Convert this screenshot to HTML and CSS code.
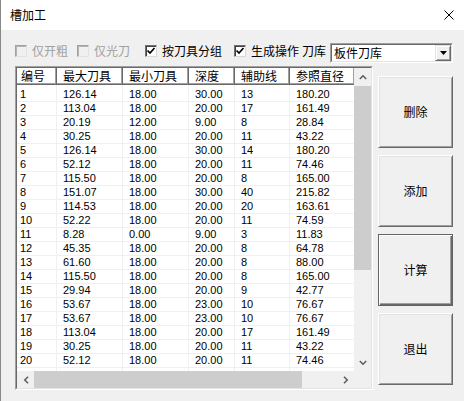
FILE: index.html
```html
<!DOCTYPE html>
<html lang="zh">
<head>
<meta charset="utf-8">
<title>槽加工</title>
<link rel="stylesheet" href="styles.css">
</head>
<body>
<div class="window">
  <div class="titlebar">
    <span class="title">槽加工</span>
    <svg class="close" width="10" height="10" viewBox="0 0 10 10"><path d="M0.5 0.5 L9.5 9.5 M9.5 0.5 L0.5 9.5" stroke="#000" stroke-width="1" fill="none"/></svg>
  </div>
  <div class="main">
    <div class="toolbar">
      <div class="check check-rough disabled"><span class="box"></span><span class="label">仅开粗</span></div>
      <div class="check check-finish disabled"><span class="box"></span><span class="label">仅光刀</span></div>
      <div class="check check-group"><span class="box"><svg width="10" height="10" viewBox="0 0 10 10"><polyline points="1.5,4.5 4,7 8.5,2" stroke="#000" stroke-width="1.7" fill="none"/></svg></span><span class="label">按刀具分组</span></div>
      <div class="check check-op"><span class="box"><svg width="10" height="10" viewBox="0 0 10 10"><polyline points="1.5,4.5 4,7 8.5,2" stroke="#000" stroke-width="1.7" fill="none"/></svg></span><span class="label">生成操作</span></div>
      <span class="lib-label">刀库</span>
      <div class="combo">
        <div class="combo-inner">
          <span class="combo-text">板件刀库</span>
          <span class="combo-btn"><svg width="7" height="4" viewBox="0 0 7 4"><polygon points="0,0 7,0 3.5,4" fill="#000"/></svg></span>
        </div>
      </div>
    </div>
    <div class="content">
      <div class="listview">
        <div class="listinner">
          <div class="viewport">
            <div class="header">
              <div class="hcell c1">编号</div>
              <div class="hcell c2">最大刀具</div>
              <div class="hcell c3">最小刀具</div>
              <div class="hcell c4">深度</div>
              <div class="hcell c5">辅助线</div>
              <div class="hcell c6">参照直径</div>
            </div>
            <div class="rows">
              <div class="row first"><div class="cell c1">1</div><div class="cell c2">126.14</div><div class="cell c3">18.00</div><div class="cell c4">30.00</div><div class="cell c5">13</div><div class="cell c6">180.20</div></div>
              <div class="row"><div class="cell c1">2</div><div class="cell c2">113.04</div><div class="cell c3">18.00</div><div class="cell c4">20.00</div><div class="cell c5">17</div><div class="cell c6">161.49</div></div>
              <div class="row"><div class="cell c1">3</div><div class="cell c2">20.19</div><div class="cell c3">12.00</div><div class="cell c4">9.00</div><div class="cell c5">8</div><div class="cell c6">28.84</div></div>
              <div class="row"><div class="cell c1">4</div><div class="cell c2">30.25</div><div class="cell c3">18.00</div><div class="cell c4">20.00</div><div class="cell c5">11</div><div class="cell c6">43.22</div></div>
              <div class="row"><div class="cell c1">5</div><div class="cell c2">126.14</div><div class="cell c3">18.00</div><div class="cell c4">30.00</div><div class="cell c5">14</div><div class="cell c6">180.20</div></div>
              <div class="row"><div class="cell c1">6</div><div class="cell c2">52.12</div><div class="cell c3">18.00</div><div class="cell c4">20.00</div><div class="cell c5">11</div><div class="cell c6">74.46</div></div>
              <div class="row"><div class="cell c1">7</div><div class="cell c2">115.50</div><div class="cell c3">18.00</div><div class="cell c4">20.00</div><div class="cell c5">8</div><div class="cell c6">165.00</div></div>
              <div class="row"><div class="cell c1">8</div><div class="cell c2">151.07</div><div class="cell c3">18.00</div><div class="cell c4">30.00</div><div class="cell c5">40</div><div class="cell c6">215.82</div></div>
              <div class="row"><div class="cell c1">9</div><div class="cell c2">114.53</div><div class="cell c3">18.00</div><div class="cell c4">20.00</div><div class="cell c5">20</div><div class="cell c6">163.61</div></div>
              <div class="row"><div class="cell c1">10</div><div class="cell c2">52.22</div><div class="cell c3">18.00</div><div class="cell c4">20.00</div><div class="cell c5">11</div><div class="cell c6">74.59</div></div>
              <div class="row"><div class="cell c1">11</div><div class="cell c2">8.28</div><div class="cell c3">0.00</div><div class="cell c4">9.00</div><div class="cell c5">3</div><div class="cell c6">11.83</div></div>
              <div class="row"><div class="cell c1">12</div><div class="cell c2">45.35</div><div class="cell c3">18.00</div><div class="cell c4">20.00</div><div class="cell c5">8</div><div class="cell c6">64.78</div></div>
              <div class="row"><div class="cell c1">13</div><div class="cell c2">61.60</div><div class="cell c3">18.00</div><div class="cell c4">20.00</div><div class="cell c5">8</div><div class="cell c6">88.00</div></div>
              <div class="row"><div class="cell c1">14</div><div class="cell c2">115.50</div><div class="cell c3">18.00</div><div class="cell c4">20.00</div><div class="cell c5">8</div><div class="cell c6">165.00</div></div>
              <div class="row"><div class="cell c1">15</div><div class="cell c2">29.94</div><div class="cell c3">18.00</div><div class="cell c4">20.00</div><div class="cell c5">9</div><div class="cell c6">42.77</div></div>
              <div class="row"><div class="cell c1">16</div><div class="cell c2">53.67</div><div class="cell c3">18.00</div><div class="cell c4">23.00</div><div class="cell c5">10</div><div class="cell c6">76.67</div></div>
              <div class="row"><div class="cell c1">17</div><div class="cell c2">53.67</div><div class="cell c3">18.00</div><div class="cell c4">23.00</div><div class="cell c5">10</div><div class="cell c6">76.67</div></div>
              <div class="row"><div class="cell c1">18</div><div class="cell c2">113.04</div><div class="cell c3">18.00</div><div class="cell c4">20.00</div><div class="cell c5">17</div><div class="cell c6">161.49</div></div>
              <div class="row"><div class="cell c1">19</div><div class="cell c2">30.25</div><div class="cell c3">18.00</div><div class="cell c4">20.00</div><div class="cell c5">11</div><div class="cell c6">43.22</div></div>
              <div class="row"><div class="cell c1">20</div><div class="cell c2">52.12</div><div class="cell c3">18.00</div><div class="cell c4">20.00</div><div class="cell c5">11</div><div class="cell c6">74.46</div></div>
              <div class="row"><div class="cell c1"></div><div class="cell c2"></div><div class="cell c3"></div><div class="cell c4"></div><div class="cell c5"></div><div class="cell c6"></div></div>
            </div>
          </div>
          <div class="vscroll">
            <div class="sbtn"><svg width="8" height="6" viewBox="0 0 8 6"><polyline points="0.8,5 4,1.8 7.2,5" stroke="#606060" stroke-width="1.6" fill="none"/></svg></div>
            <div class="vtrack"><div class="vthumb"></div></div>
            <div class="sbtn"><svg width="8" height="6" viewBox="0 0 8 6"><polyline points="0.8,1 4,4.2 7.2,1" stroke="#606060" stroke-width="1.6" fill="none"/></svg></div>
          </div>
          <div class="hscroll">
            <div class="sbtn"><svg width="6" height="8" viewBox="0 0 6 8"><polyline points="5,0.8 1.8,4 5,7.2" stroke="#606060" stroke-width="1.6" fill="none"/></svg></div>
            <div class="htrack"><div class="hthumb"></div></div>
            <div class="sbtn"><svg width="6" height="8" viewBox="0 0 6 8"><polyline points="1,0.8 4.2,4 1,7.2" stroke="#606060" stroke-width="1.6" fill="none"/></svg></div>
          </div>
          <div class="corner"></div>
        </div>
      </div>
      <div class="buttons">
        <div class="btn">删除</div>
        <div class="btn">添加</div>
        <div class="btn default">计算</div>
        <div class="btn">退出</div>
      </div>
    </div>
  </div>
</div>
</body>
</html>
```
FILE: styles.css
```css
html, body {
  margin: 0;
  padding: 0;
  background: #f0f0f0;
}
body {
  font-family: "Noto Sans CJK SC", "Noto Sans", sans-serif;
  color: #000;
}
.window {
  width: 464px;
  height: 401px;
  box-sizing: border-box;
  border-left: 1px solid #888888;
  background: #f0f0f0;
  overflow: hidden;
}
.titlebar {
  height: 30px;
  box-sizing: border-box;
  background: #ffffff;
  display: flex;
  align-items: center;
  justify-content: space-between;
  padding: 0 10px 0 9px;
  font-size: 12px;
  line-height: 14px;
}
.close {
  display: block;
}
.main {
  padding: 13px 0 0 14px;
}
.toolbar {
  display: flex;
  align-items: flex-start;
  height: 20px;
  font-size: 12px;
  line-height: 14px;
}
.check {
  display: flex;
  align-items: center;
  gap: 5px;
  height: 14px;
  margin-top: 1px;
}
.check-rough { width: 62px; }
.check-finish { width: 68px; }
.check-group { width: 89px; }
.check-op { width: 68px; }
.box {
  width: 12px;
  height: 12px;
  box-sizing: border-box;
  border: 1px solid;
  border-color: #707070 #d8d8d8 #d8d8d8 #707070;
  box-shadow: inset 1px 1px 0 #404040;
  background: #ffffff;
  display: flex;
  align-items: center;
  justify-content: center;
  flex: none;
}
.box svg { display: block; }
.disabled .box {
  background: #f0f0f0;
  border-color: #a0a0a0 #e3e3e3 #e3e3e3 #a0a0a0;
  box-shadow: inset 1px 1px 0 #b4b4b4;
}
.disabled .label {
  color: #a0a0a0;
}
.label {
  white-space: nowrap;
}
.lib-label {
  width: 28px;
  margin-top: 1px;
  white-space: nowrap;
}
.combo {
  width: 123px;
  height: 20px;
  box-sizing: border-box;
  border: 1px solid;
  border-color: #a0a0a0 #ffffff #ffffff #a0a0a0;
}
.combo-inner {
  height: 100%;
  box-sizing: border-box;
  border: 1px solid;
  border-color: #696969 #e3e3e3 #e3e3e3 #696969;
  background: #ffffff;
  display: flex;
  align-items: center;
  justify-content: space-between;
  padding-left: 2px;
}
.combo-text {
  white-space: nowrap;
}
.combo-btn {
  width: 16px;
  height: 16px;
  box-sizing: border-box;
  border: 1px solid;
  border-color: #e3e3e3 #696969 #696969 #e3e3e3;
  box-shadow: inset 1px 1px 0 #ffffff, inset -1px -1px 0 #a0a0a0;
  background: #f0f0f0;
  display: flex;
  align-items: center;
  justify-content: center;
}
.combo-btn svg { display: block; }
.content {
  display: flex;
  gap: 5px;
  margin-top: 3px;
}
.listview {
  width: 358px;
  height: 324px;
  box-sizing: border-box;
  border: 1px solid;
  border-color: #a0a0a0 #ffffff #ffffff #a0a0a0;
  flex: none;
}
.listinner {
  height: 100%;
  box-sizing: border-box;
  border: 1px solid;
  border-color: #696969 #e3e3e3 #e3e3e3 #696969;
  display: grid;
  grid-template-columns: 337px 17px;
  grid-template-rows: 303px 17px;
  background: #ffffff;
}
.viewport {
  overflow: hidden;
  background: #ffffff;
}
.header {
  display: flex;
  height: 17px;
  width: 338px;
}
.hcell {
  flex: none;
  box-sizing: border-box;
  height: 17px;
  padding-left: 6px;
  font-size: 12px;
  line-height: 16px;
  border-right: 1px solid #696969;
  border-bottom: 1px solid #696969;
  box-shadow: inset -1px -1px 0 #a0a0a0, inset 1px 1px 0 #ffffff;
  background: #ffffff;
  white-space: nowrap;
  overflow: hidden;
}
.hcell.c1 { padding-left: 4px; }
.c1 { width: 40px; }
.c2 { width: 66px; }
.c3 { width: 66px; }
.c4 { width: 46px; }
.c5 { width: 55px; }
.c6 { width: 65px; }
.rows {
  width: 338px;
}
.row {
  display: flex;
  height: 14px;
}
.row.first {
  height: 17px;
}
.cell {
  flex: none;
  box-sizing: border-box;
  height: 14px;
  padding-left: 6px;
  border-right: 1px solid #f0f0f0;
  border-bottom: 1px solid #f0f0f0;
  font-family: "Liberation Sans", Arial, sans-serif;
  font-size: 11px;
  line-height: 13px;
  white-space: nowrap;
  overflow: hidden;
}
.row.first .cell {
  height: 17px;
  padding-top: 3px;
}
.cell.c1 { padding-left: 3px; }
.vscroll {
  background: #f0f0f0;
  display: flex;
  flex-direction: column;
}
.sbtn {
  width: 17px;
  height: 17px;
  flex: none;
  display: flex;
  align-items: center;
  justify-content: center;
  background: #f0f0f0;
}
.sbtn svg { display: block; }
.vtrack {
  flex: 1;
  background: #f0f0f0;
}
.vthumb {
  height: 184px;
  margin-top: 1px;
  background: #cdcdcd;
}
.hscroll {
  background: #f0f0f0;
  display: flex;
}
.htrack {
  flex: 1;
  background: #f0f0f0;
}
.hthumb {
  width: 268px;
  height: 17px;
  background: #cdcdcd;
}
.corner {
  background: #f0f0f0;
}
.buttons {
  display: flex;
  flex-direction: column;
  gap: 7px;
  padding-top: 10px;
}
.btn {
  width: 75px;
  height: 72px;
  box-sizing: border-box;
  border: 1px solid;
  border-color: #ffffff #696969 #696969 #ffffff;
  box-shadow: inset 1px 1px 0 #e3e3e3, inset -1px -1px 0 #a0a0a0;
  background: #f0f0f0;
  display: flex;
  align-items: center;
  justify-content: center;
  font-size: 12px;
  line-height: 14px;
}
.btn.default {
  border-color: #646464;
  box-shadow: inset 1px 1px 0 #ffffff, inset -1px -1px 0 #696969, inset -2px -2px 0 #a0a0a0;
}
```
